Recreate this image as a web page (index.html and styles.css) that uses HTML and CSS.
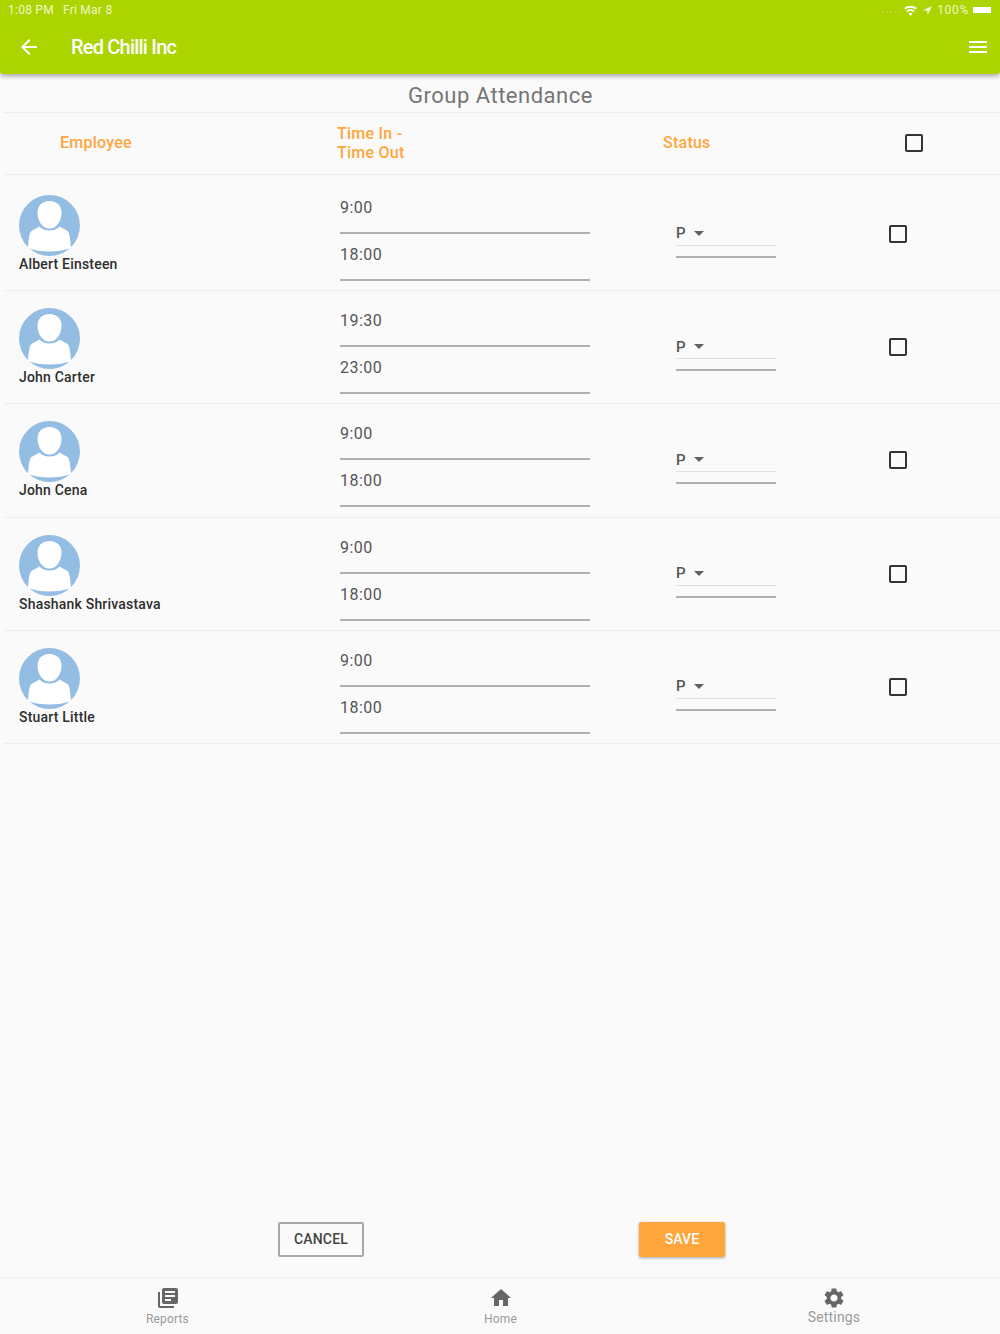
FILE: index.html
```html
<!DOCTYPE html>
<html lang="en">
<head>
<meta charset="utf-8">
<title>Group Attendance</title>
<link rel="stylesheet" href="styles.css">
</head>
<body>
<svg class="defs" width="0" height="0" aria-hidden="true">
  <symbol id="avatar" viewBox="0 0 61 61">
    <circle cx="30.500" cy="30.500" r="30.500" fill="#94bde3"/>
    <path fill="#fff" d="M30.500 6C23 6 18.500 11 18.500 17.500c0 8 4.500 16 12 16s12-8 12-16C42.500 11 38 6 30.500 6z"/>
    <path fill="#fff" d="M20.500 31.500c-3 2-6 3-8 4.500-1.500 1.500-2.500 3.500-3.500 17 6 2.500 14 3.500 21.500 3.500s15-1 21.500-3.500c-1-13.500-2-15.500-3.500-17-2-1.500-5-2.500-8-4.500-2 2.500-5.500 4-10 4s-8-1.500-10-4z"/>
  </symbol>
</svg>

<header class="appbar">
  <div class="statusbar">
    <div class="status-left"><span>1:08 PM</span><span>Fri Mar 8</span></div>
    <div class="status-right">
      <span class="dots">....</span>
      <svg class="status-icon" viewBox="0 0 16 12"><path fill="#fff" d="M8 12l-2.200-2.700a3.400 3.400 0 0 1 4.400 0zM4.700 8 3.400 6.400a7.200 7.200 0 0 1 9.200 0L11.300 8a5.200 5.200 0 0 0-6.600 0zM2.300 5 1 3.400a11 11 0 0 1 14 0L13.700 5a9 9 0 0 0-11.400 0z"/></svg>
      <svg class="status-icon loc" viewBox="0 0 12 12"><path fill="#f2f8d0" d="M11 1 1 5.800l4.600.6.600 4.600z"/></svg>
      <span class="percent">100%</span>
      <span class="battery"></span>
    </div>
  </div>
  <div class="toolbar">
    <svg class="bar-icon" viewBox="0 0 24 24"><path fill="#fff" d="M20 11H7.830l5.590-5.590L12 4l-8 8 8 8 1.410-1.410L7.830 13H20v-2z"/></svg>
    <span class="brand">Red Chilli Inc</span>
    <svg class="bar-icon menu" viewBox="0 0 24 24"><path fill="#fff" d="M3 18h18v-2H3v2zm0-5h18v-2H3v2zm0-7v2h18V6H3z"/></svg>
  </div>
</header>

<main class="content">
  <h1 class="page-title">Group Attendance</h1>
  <div class="table-head">
    <div class="head-name">Employee</div>
    <div>Time In -<br>Time Out</div>
    <div>Status</div>
    <div class="checkbox"></div>
  </div>
  <div class="rows">
    <div class="row">
      <div class="person"><svg class="avatar"><use href="#avatar"/></svg><span class="name">Albert Einsteen</span></div>
      <div class="times"><div class="field">9:00</div><div class="field">18:00</div></div>
      <div class="status"><div class="select"><span>P</span><i class="caret"></i></div></div>
      <div class="checkbox"></div>
    </div>
    <div class="row">
      <div class="person"><svg class="avatar"><use href="#avatar"/></svg><span class="name">John Carter</span></div>
      <div class="times"><div class="field">19:30</div><div class="field">23:00</div></div>
      <div class="status"><div class="select"><span>P</span><i class="caret"></i></div></div>
      <div class="checkbox"></div>
    </div>
    <div class="row">
      <div class="person"><svg class="avatar"><use href="#avatar"/></svg><span class="name">John Cena</span></div>
      <div class="times"><div class="field">9:00</div><div class="field">18:00</div></div>
      <div class="status"><div class="select"><span>P</span><i class="caret"></i></div></div>
      <div class="checkbox"></div>
    </div>
    <div class="row">
      <div class="person"><svg class="avatar"><use href="#avatar"/></svg><span class="name">Shashank Shrivastava</span></div>
      <div class="times"><div class="field">9:00</div><div class="field">18:00</div></div>
      <div class="status"><div class="select"><span>P</span><i class="caret"></i></div></div>
      <div class="checkbox"></div>
    </div>
    <div class="row">
      <div class="person"><svg class="avatar"><use href="#avatar"/></svg><span class="name">Stuart Little</span></div>
      <div class="times"><div class="field">9:00</div><div class="field">18:00</div></div>
      <div class="status"><div class="select"><span>P</span><i class="caret"></i></div></div>
      <div class="checkbox"></div>
    </div>
  </div>
</main>

<div class="actions">
  <button class="btn btn-cancel">CANCEL</button>
  <button class="btn btn-save">SAVE</button>
</div>

<nav class="bottom-nav">
  <div class="nav-item">
    <svg class="nav-icon" viewBox="0 0 24 24"><path d="M4 6H2v14c0 1.100.9 2 2 2h14v-2H4V6zm16-4H8c-1.100 0-2 .9-2 2v12c0 1.100.9 2 2 2h12c1.100 0 2-.9 2-2V4c0-1.100-.9-2-2-2zm-1 9H9V9h10v2zm-4 4H9v-2h6v2zm4-8H9V5h10v2z"/></svg>
    <span>Reports</span>
  </div>
  <div class="nav-item">
    <svg class="nav-icon" viewBox="0 0 24 24"><path d="M10 20v-6h4v6h5v-8h3L12 3 2 12h3v8z"/></svg>
    <span>Home</span>
  </div>
  <div class="nav-item nav-settings">
    <svg class="nav-icon" viewBox="0 0 24 24"><path d="M19.140 12.940c.04-.3.060-.61.060-.94 0-.32-.02-.64-.07-.94l2.030-1.580a.49.49 0 0 0 .12-.61l-1.920-3.320a.488.488 0 0 0-.59-.22l-2.390.96c-.5-.38-1.030-.7-1.620-.94l-.36-2.540a.484.484 0 0 0-.48-.41h-3.840c-.24 0-.43.170-.47.410l-.36 2.540c-.59.240-1.130.570-1.620.94l-2.390-.96c-.22-.08-.47 0-.59.220L2.740 8.870c-.12.210-.08.470.12.610l2.030 1.580c-.05.3-.09.630-.09.940s.02.640.07.940l-2.030 1.580a.49.49 0 0 0-.12.610l1.920 3.320c.12.220.37.290.59.220l2.390-.96c.5.380 1.030.7 1.620.94l.36 2.540c.05.240.24.410.48.410h3.840c.24 0 .44-.17.47-.41l.36-2.540c.59-.24 1.130-.56 1.620-.94l2.390.96c.22.080.47 0 .59-.22l1.920-3.320c.12-.22.070-.47-.12-.61l-2.010-1.580zM12 15.600c-1.980 0-3.600-1.620-3.600-3.600s1.620-3.600 3.600-3.600 3.600 1.620 3.600 3.600-1.620 3.600-3.600 3.600z"/></svg>
    <span>Settings</span>
  </div>
</nav>
</body>
</html>
```
FILE: styles.css
```css
* { box-sizing: border-box; }
html, body { height: 100%; }
body {
  margin: 0;
  height: 1334px;
  overflow: hidden;
  display: flex;
  flex-direction: column;
  background: #fafafa;
  color: #444;
  font-family: Roboto, "Liberation Sans", sans-serif;
}
.defs { position: absolute; }

.appbar {
  height: 74px;
  flex: none;
  background: #acd400;
  color: #fff;
  border-radius: 0 0 3px 3px;
  box-shadow: 0 2px 5px rgba(0, 0, 0, .35);
  position: relative;
}
.statusbar {
  height: 20px;
  padding: 0 0 0 8px;
  display: flex;
  justify-content: space-between;
  align-items: center;
  font-size: 12px;
  letter-spacing: .25px;
  color: #f0f7c8;
}
.status-left { display: flex; gap: 9px; }
.status-right { display: flex; align-items: center; gap: 4px; }
.dots { letter-spacing: 1px; color: #cfe66e; margin-right: 1px; transform: translateY(-1px); }
.status-icon { width: 15px; height: 11px; }
.status-icon.loc { width: 11px; height: 11px; }
.percent { letter-spacing: .7px; }
.battery { width: 18px; height: 6px; background: #fff; margin: 0 9px 0 0; }
.toolbar {
  height: 54px;
  display: flex;
  align-items: center;
  padding: 0 10px 0 17px;
}
.bar-icon { width: 24px; height: 24px; flex: none; }
.bar-icon.menu { margin-left: auto; }
.brand {
  margin-left: 30px;
  font-size: 20px;
  font-weight: 500;
  letter-spacing: -.8px;
}

.content { flex: 1; min-height: 0; }
.page-title {
  margin: 0 0 0 3px;
  height: 39px;
  border-bottom: 1px solid #eeeeee;
  font-size: 22px;
  font-weight: 400;
  line-height: 44px;
  text-align: center;
  letter-spacing: .5px;
  color: #757575;
  padding-right: 2px;
}
.table-head {
  height: 62px;
  margin-left: 4px;
  padding-bottom: 2px;
  border-bottom: 1px solid #eeeeee;
  display: grid;
  grid-template-columns: 333px 326px 242px 1fr;
  align-items: center;
  font-size: 16px;
  font-weight: 500;
  line-height: 19px;
  letter-spacing: .25px;
  color: #ffa63d;
}
.head-name { padding-left: 56px; }
.rows { margin-top: 2.85px; }
.row {
  height: 113.25px;
  margin-left: 4px;
  border-bottom: 1px solid #eeeeee;
  display: grid;
  grid-template-columns: 336px 336px 213px 1fr;
  align-items: center;
}
.person {
  align-self: start;
  padding: 17px 0 0 15px;
  display: flex;
  flex-direction: column;
  align-items: flex-start;
}
.avatar { width: 61px; height: 61px; display: block; }
.name {
  font-size: 14px;
  font-weight: 500;
  line-height: 17px;
  letter-spacing: .2px;
  color: #2e2e2e;
}
.times { width: 250px; align-self: start; padding-top: 9px; }
.field {
  height: 47px;
  padding-top: 11px;
  border-bottom: 2px solid #b0b0b0;
  font-size: 16px;
  line-height: 19px;
  letter-spacing: .5px;
  color: #555;
}
.status { width: 100px; }
.select {
  height: 24px;
  border-bottom: 1px solid #e0e0e0;
  display: flex;
  align-items: center;
  gap: 8px;
  font-size: 15px;
  font-weight: 500;
  color: #555;
  position: relative;
}
.select::after {
  content: "";
  position: absolute;
  left: 0;
  right: 0;
  bottom: -13px;
  border-bottom: 2px solid #b0b0b0;
}
.caret {
  width: 0;
  height: 0;
  border: 5px solid transparent;
  border-top-color: #616161;
  border-bottom: 0;
}
.checkbox {
  width: 18px;
  height: 18px;
  border: 2px solid #333;
  border-radius: 2px;
}

.actions {
  flex: none;
  height: 58px;
  padding: 3px 0 0 278px;
  display: flex;
  align-items: flex-start;
  gap: 275px;
}
.btn {
  width: 86px;
  height: 35px;
  padding: 0 0 2px;
  border-radius: 2px;
  font-family: inherit;
  font-size: 14px;
  font-weight: 500;
  letter-spacing: .15px;
}
.btn-cancel { background: transparent; border: 2px solid #a8a8a8; color: #444; }
.btn-save {
  background: #ffa63d;
  border: 0;
  color: #fff;
  box-shadow: 0 1px 3px rgba(0, 0, 0, .35);
}
.bottom-nav {
  flex: none;
  height: 57px;
  padding-left: 1px;
  border-top: 1px solid #f0f0f0;
  display: grid;
  grid-template-columns: repeat(3, 1fr);
}
.nav-item {
  padding-top: 8px;
  display: flex;
  flex-direction: column;
  align-items: center;
  font-size: 12px;
  line-height: 14px;
  letter-spacing: .15px;
  color: #9a9a9a;
}
.nav-icon { width: 24px; height: 24px; fill: #666; display: block; margin-bottom: 2px; }
.nav-settings { font-size: 14px; padding-left: 1px; }
.nav-settings .nav-icon { margin-bottom: 0; }
```
